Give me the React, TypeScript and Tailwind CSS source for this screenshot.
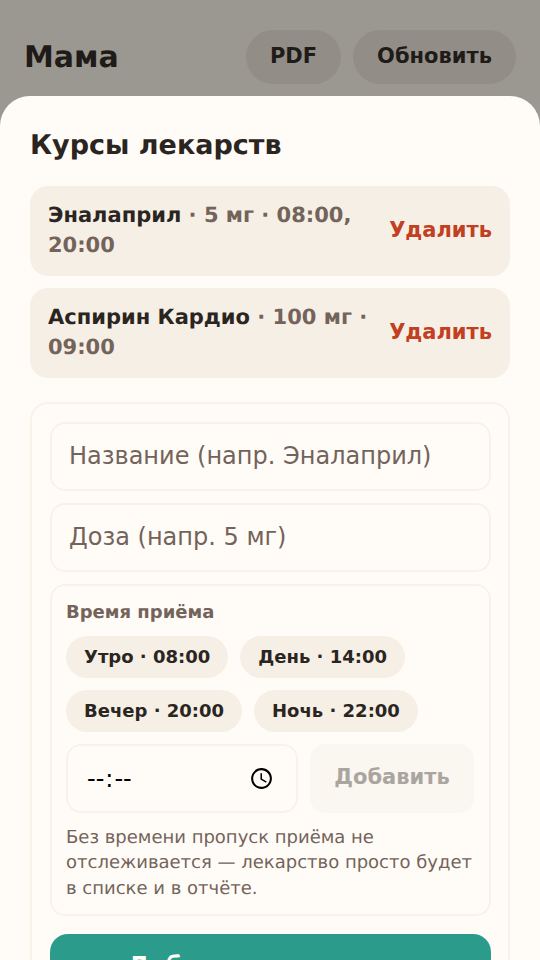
const font = "font-['DejaVu_Sans',sans-serif] [text-rendering:geometricPrecision]";

const courses = [
  { name: "Эналаприл", details: " · 5 мг · 08:00, 20:00" },
  { name: "Аспирин Кардио", details: " · 100 мг · 09:00" },
];

const presets = ["Утро · 08:00", "День · 14:00", "Вечер · 20:00", "Ночь · 22:00"];

function CourseRow({ name, details }: { name: string; details: string }) {
  return (
    <div className="flex items-center gap-3 rounded-[18px] bg-[#f6efe5] px-[18px] pt-[14px] pb-[16px]">
      <div className="flex-1 text-[21px] leading-[30px] font-bold text-[#73635a]">
        <span className="text-[#2b2522]">{name}</span>
        {details}
      </div>
      <button className="mt-[2px] text-[21px] font-bold text-[#c23f22]">Удалить</button>
    </div>
  );
}

function TextField({ placeholder }: { placeholder: string }) {
  return (
    <input
      placeholder={placeholder}
      className="h-[69px] w-full rounded-[15px] border-2 border-[#f8f2e9] bg-[#fffcf7] px-[17.5px] text-[24px] text-[#2b2522] outline-none placeholder:text-[#73635a]"
    />
  );
}

export default function App() {
  return (
    <div className={`${font} h-[960px] w-[540px] overflow-hidden bg-[#9a9890]`}>
      <header className="flex h-[96px] items-start justify-between pt-[30px] pr-[24px] pl-[24px]">
        <h1 className="pt-[8px] text-[30px] leading-[40px] font-bold text-[#1f1b18]">Мама</h1>
        <div className="flex gap-[12px]">
          <button className="h-[54px] rounded-full bg-[#928e87] px-[24px] text-[21px] font-bold text-[#1f1b18]">PDF</button>
          <button className="h-[54px] rounded-full bg-[#928e87] px-[24px] text-[21px] font-bold text-[#1f1b18]">Обновить</button>
        </div>
      </header>
      <main className="h-[900px] rounded-t-[30px] bg-[#fffcf7] px-[30px] pt-[31px]">
        <h2 className="text-[27px] leading-[38px] font-bold text-[#2b2522]">Курсы лекарств</h2>
        <div className="mt-[21px] flex flex-col gap-[12px]">
          {courses.map((c) => (
            <CourseRow key={c.name} name={c.name} details={c.details} />
          ))}
        </div>
        <div className="mt-[24px] flex flex-col gap-[12px] rounded-[18px] border-2 border-[#f8f2e9] p-[17.5px]">
          <TextField placeholder="Название (напр. Эналаприл)" />
          <TextField placeholder="Доза (напр. 5 мг)" />
          <div className="rounded-[15px] border-2 border-[#f8f2e9] px-[14.5px] pt-[15px] pb-[13px]">
            <div className="text-[18px] leading-[24px] font-bold text-[#73635a]">Время приёма</div>
            <div className="mt-[11px] flex flex-wrap gap-[12px]">
              {presets.map((p) => (
                <button key={p} className="h-[42px] rounded-full bg-[#f6efe5] px-[18px] text-[18px] font-bold text-[#2b2522]">
                  {p}
                </button>
              ))}
            </div>
            <div className="mt-[12px] flex gap-[12px]">
              <input
                type="time"
                lang="ru"
                className="h-[69px] min-w-0 flex-1 rounded-[15px] border-2 border-[#f8f2e9] bg-[#fffcf7] pt-[1px] pr-[19px] pl-[18px] text-[24px] text-black outline-none [&::-webkit-datetime-edit-ampm-field]:hidden"
              />
              <button disabled className="h-[69px] w-[164px] rounded-[15px] bg-[#faf6f0] text-[21px] font-bold text-[#aaa5a0]">
                Добавить
              </button>
            </div>
            <p className="mt-[12px] text-[18px] leading-[25.5px] text-[#73635a]">
              Без времени пропуск приёма не отслеживается — лекарство просто будет в списке и в отчёте.
            </p>
          </div>
          <button className="mt-[6px] h-[64px] rounded-[18px] bg-[#2b9c8c] text-[24px] font-bold text-[#fffcf7]">
            Добавить лекарство
          </button>
        </div>
      </main>
    </div>
  );
}
